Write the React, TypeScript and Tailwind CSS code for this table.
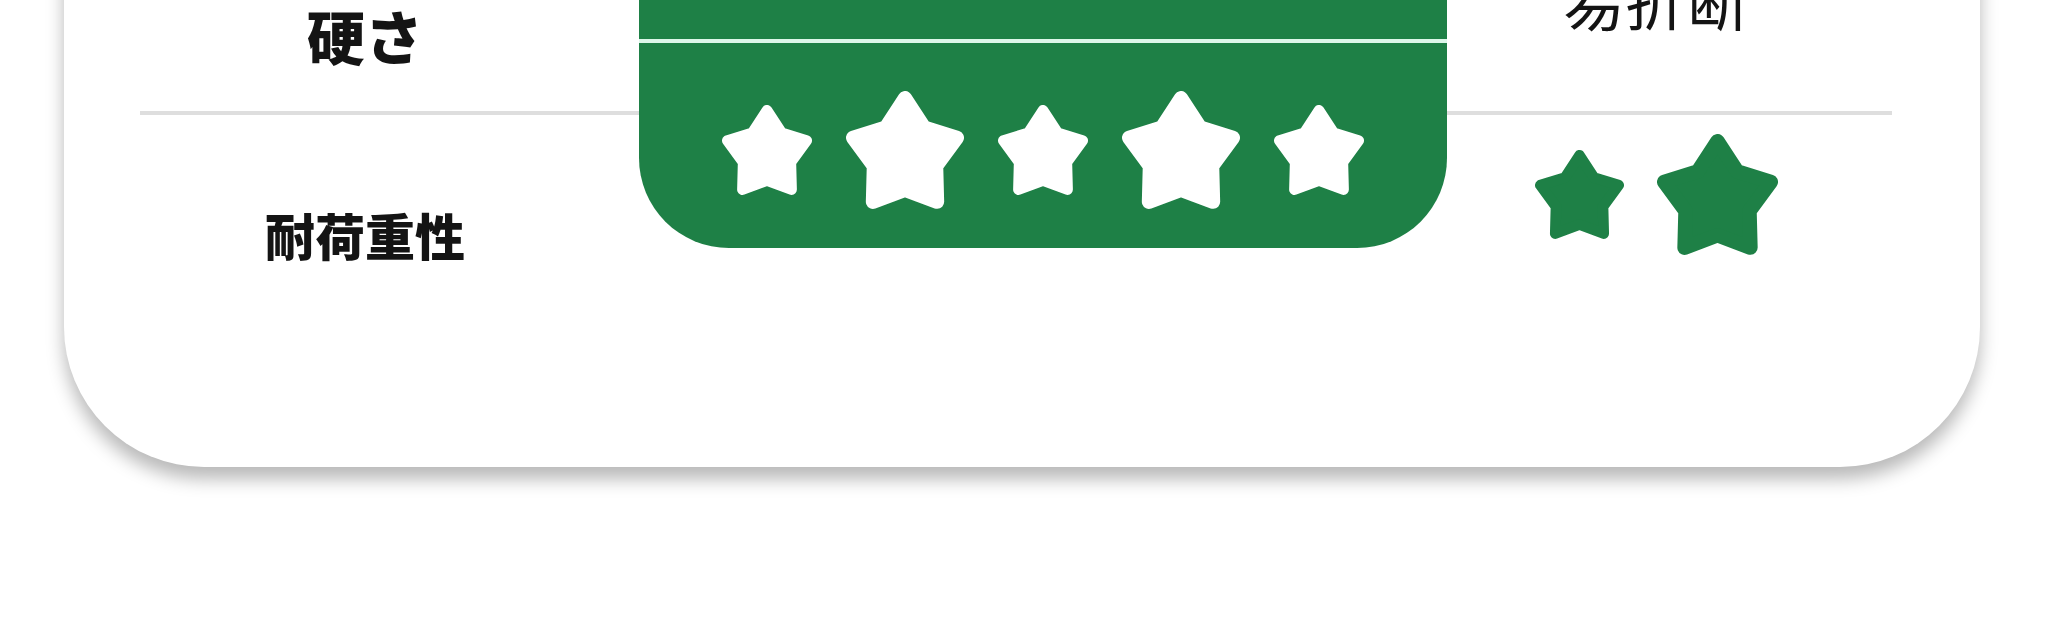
const STAR_POINTS =
  "50,6 66.32,31 94.01,39.57 76.4,63.59 77.2,93.88 50,83.73 22.8,93.88 23.6,63.59 5.99,39.57 33.68,31";

function Star({ size, color }: { size: number; color: string }) {
  return (
    <svg width={size} height={size} viewBox="0 0 100 100" className="shrink-0">
      <polygon points={STAR_POINTS} fill={color} stroke={color} strokeWidth="12" strokeLinejoin="round" />
    </svg>
  );
}

const jp = { fontFamily: '"Noto Sans CJK JP", "Noto Sans", sans-serif' };

export default function App() {
  return (
    <div className="w-[2048px] h-[624px] overflow-hidden bg-white" style={jp}>
      <div className="ml-[64px] mt-[-200px] w-[1916px] h-[667px] rounded-[140px] bg-white shadow-[0_12px_18px_rgba(0,0,0,0.28)] pt-[158px] pl-[76px] pr-[88px] flex">
        {/* left labels */}
        <div className="w-[499px] flex flex-col">
          <div className="h-[157px] border-b-4 border-[#dedede] pr-[49px] flex items-center justify-center">
            <span className="text-[58px] leading-none font-black text-[#141414]">硬さ</span>
          </div>
          <div className="h-[238px] pr-[49px] flex items-center justify-center">
            <span className="text-[50px] leading-none font-black text-[#141414]">耐荷重性</span>
          </div>
        </div>

        {/* highlighted column */}
        <div className="w-[808px] h-[290px] flex flex-col bg-[#1e8046] rounded-b-[90px] overflow-hidden">
          <div className="h-[85px] border-b-4 border-[#dcf7e9]" />
          <div className="flex-1 pt-[8px] flex items-center justify-center gap-[34px]">
            <Star size={90} color="#ffffff" />
            <Star size={118} color="#ffffff" />
            <Star size={90} color="#ffffff" />
            <Star size={118} color="#ffffff" />
            <Star size={90} color="#ffffff" />
          </div>
        </div>

        {/* other product */}
        <div className="flex-1 flex flex-col">
          <div className="h-[157px] border-b-4 border-[#dedede] pr-[27px] pb-[71px] flex items-center justify-center">
            <span
              className="text-[62px] leading-none font-normal text-[#141414]"
              style={{ fontFamily: '"Noto Sans CJK SC", "Noto Sans CJK JP", sans-serif' }}
            >
              易折断
            </span>
          </div>
          <div className="h-[158px] pr-[27px] flex items-center justify-center gap-[33px]">
            <Star size={89} color="#1e8046" />
            <Star size={121} color="#1e8046" />
          </div>
        </div>
      </div>
    </div>
  );
}
